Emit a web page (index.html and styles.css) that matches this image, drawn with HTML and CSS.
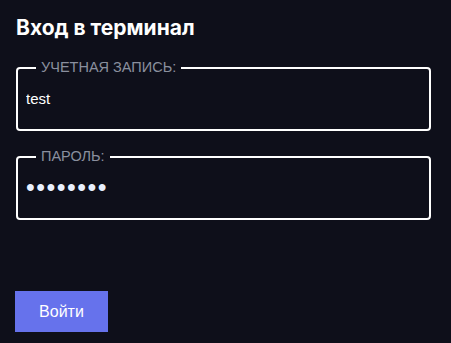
FILE: index.html
```html
<!DOCTYPE html>
<html lang="ru">
<head>
    <meta charset="UTF-8">
    <meta name="viewport" content="width=device-width, initial-scale=1.0">
    <title>Вход в терминал</title>
    <link rel="stylesheet" href="styles.css">
</head>
<body>
    <div class="login">
        <h2>Вход в терминал</h2>

        <fieldset class="field">
            <legend>Учетная запись:</legend>
            <input type="text" id="login" value="test">
        </fieldset>

        <fieldset class="field">
            <legend>Пароль:</legend>
            <input type="password" id="password" value="12345678" class="pass">
        </fieldset>

        <button class="btn">Войти</button>
    </div>
</body>
</html>
```

FILE: styles.css
```css
body {
    margin: 0;
    background-color: #0e0f1a;
    font-family: 'Liberation Sans', Arial, sans-serif;
    color: #fff;
}
.login {
    padding: 16px 20px 0 16px;
    display: flex;
    flex-direction: column;
}
h2 {
    font-family: 'Inter', sans-serif;
    font-size: 21px;
    font-weight: 700;
    margin: 0 0 20px 0;
    line-height: 24px;
}
.field {
    margin: 0 0 18px 0;
    padding: 0 8px 0 8px;
    border: 2px solid #fff;
    border-radius: 4px;
    height: 67px;
    box-sizing: content-box;
}
.field legend {
    margin-left: 10px;
    padding: 0 5px;
    font-size: 14.5px;
    line-height: 15px;
    text-transform: uppercase;
    color: #8a8f9e;
}
.field input {
    background: transparent;
    border: none;
    outline: none;
    color: #fff;
    font-family: 'Liberation Sans', Arial, sans-serif;
    font-size: 15px;
    padding: 0;
    margin-top: 13px;
    width: 100%;
    height: 20px;
}
.field input.pass {
    color: #e8f0ff;
    font-size: 25px;
    letter-spacing: 1.5px;
}
.btn {
    align-self: flex-start;
    margin-top: 53px;
    margin-left: -1px;
    background: #6672ec;
    color: #fff;
    border: none;
    width: 93px;
    height: 41px;
    font-family: 'Liberation Sans', Arial, sans-serif;
    font-size: 16px;
    cursor: pointer;
}
```
